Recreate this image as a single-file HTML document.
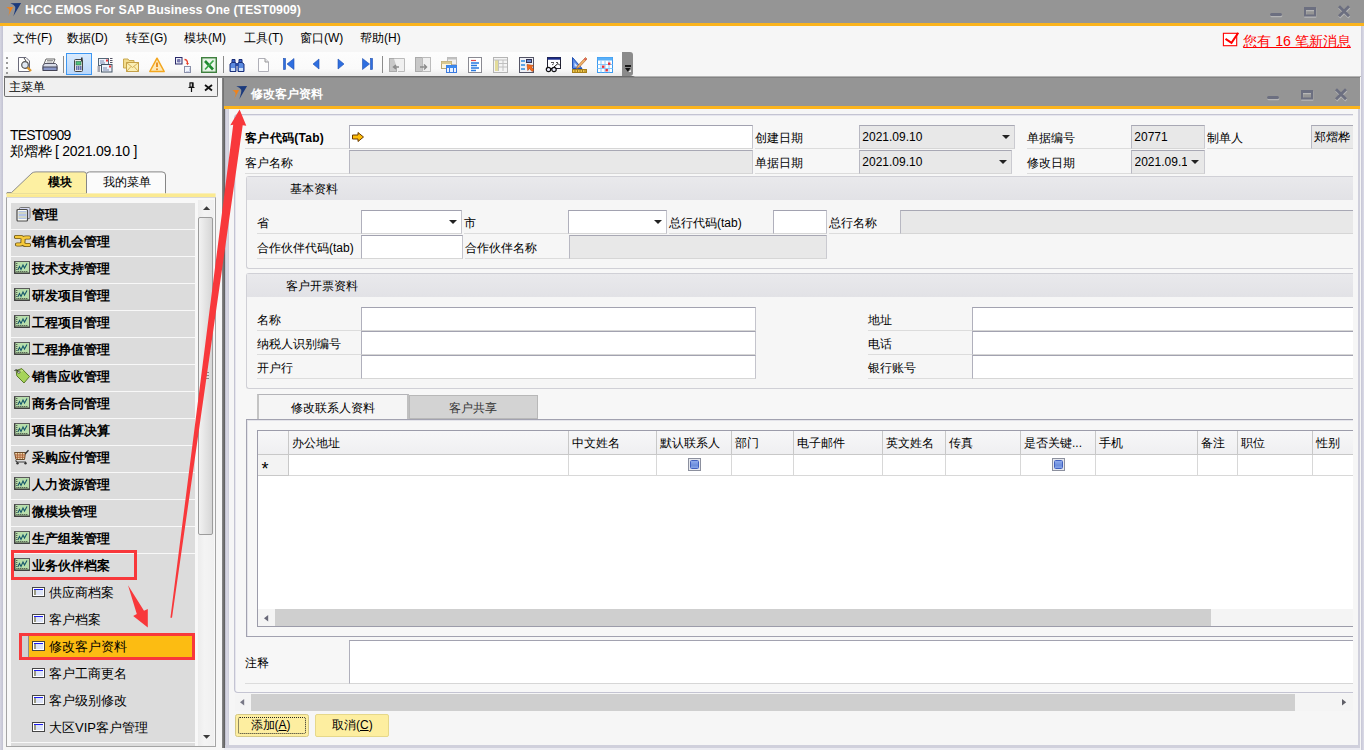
<!DOCTYPE html>
<html lang="zh">
<head>
<meta charset="utf-8">
<title>HCC EMOS For SAP Business One (TEST0909)</title>
<style>
*{box-sizing:border-box;margin:0;padding:0}
html,body{width:1364px;height:750px;overflow:hidden}
body{position:relative;background:#f6f6f6;font-family:"Liberation Sans",sans-serif;font-size:13px;color:#000;line-height:1}
.abs,.abs *{position:absolute}
#app{position:absolute;left:0;top:0;width:1364px;height:750px;overflow:hidden}
#app div,#app span,#app svg,#app a,#app b,#app i{position:absolute;white-space:nowrap}
/* title */
#tbar{left:0;top:0;width:1364px;height:23px;background:#959595}
#tline{left:0;top:23px;width:1364px;height:3px;background:#fbb41d}
#ttext{left:25px;top:4px;color:#fff;font-weight:bold;font-size:12.4px}
.lb{left:0;top:26px;width:3px;height:724px;background:linear-gradient(90deg,#d6d6e2,#c2c2d2)}
.rb{left:1361px;top:26px;width:3px;height:724px;background:linear-gradient(90deg,#c6c6d6,#dcdce8)}
.bb{left:224px;top:745px;width:1135.500px;height:5px;background:linear-gradient(#d0d0dc 0,#d0d0dc 3px,#ececf2 3.500px)}
.mi{top:32px;font-size:12px}
#msg{left:1243.200px;top:34px;font-size:14.200px;color:#f00;text-decoration:underline}
/* toolbar */
#tool{left:4px;top:52px;width:619px;height:24px;background:linear-gradient(#fdfdfd,#fafafa 70%,#e9e9e9)}
#toolcap{left:622px;top:52px;width:11px;height:24px;background:#8b8b8b;border-radius:0 3px 3px 0}
#sep1{left:4px;top:76px;width:1357px;height:1px;background:linear-gradient(90deg,#6c6c6c 0,#6c6c6c 629px,#b4b4b4 631px)}
#sep2{left:4px;top:77px;width:1355.500px;height:1px;background:#838383}
/* left panel */
#lphead{left:4px;top:78px;width:214px;height:19px;border:1px solid #6e6e6e;border-top:none;background:#f0f0f0;border-radius:0 0 2px 2px}
#lphead span{left:4.300px;top:3px;font-size:12px}
.u1{left:10px;top:128px;font-size:14px;letter-spacing:-0.8px}
.u2{left:10px;top:144px;font-size:14px;letter-spacing:-0.25px}
.row{left:11px;width:184px;height:26px;background:#dcdcdc}
.row b{left:21px;top:4.500px;font-size:13px}
.sub{left:11px;width:184px;height:27px;background:#dcdcdc}
.sub span{left:38px;top:6.500px;font-size:13px}
.sico{left:21px;top:8px;width:13px;height:10px;border:1px solid #444;background:#fff}
.sico i{position:absolute;left:1px;top:1px;width:9px;height:6px;background:linear-gradient(90deg,#9a9a84 0,#9a9a84 1.500px,#dde4f8 1.500px);border-top:1.500px solid #1c1cf0}
/* main window */
#mw{left:223px;top:78px;width:1135px;height:667px;background:#f6f6f6}
.lbl{font-size:12px;color:#000;margin-top:1px}
.ul{height:1px;background:#dcdcdc}
.inp{background:#fff;border:1px solid #c4c4cc;border-top-color:#a2a2b0;border-left-color:#b0b0bc;border-bottom-color:#d6d6d6;height:24px}
.ro{background:#e8e8e8;border:1px solid #cacad0;border-top-color:#a8a8b4;border-left-color:#b8b8c2;border-bottom-color:#d6d6d6;height:24px}
.ro span,.inp span{left:2.300px;top:5px;font-size:12px}
.dd{width:0;height:0;border-left:4px solid transparent;border-right:4px solid transparent;border-top:4px solid #222}
.grp{border:1px solid #d0d0d6;background:#f6f6f6}
.grph{left:0;top:0;height:23px;background:linear-gradient(#e9e9ec,#e2e2e6)}
.th{top:431px;height:24px;background:linear-gradient(#f7f7f8,#efeff1);border-right:1px solid #c8c8c8;border-bottom:1px solid #c8c8c8}
.th span{left:3px;top:6px;font-size:12px}
.td{top:455px;height:21px;border-right:1px solid #d8d8d8;border-bottom:1px solid #d8d8d8;background:#fff}
.cb{top:458px;width:13px;height:13px;border:1px solid #8c909e;background:#e6e8ee}
.cb i{position:absolute;left:1px;top:1px;width:9px;height:9px;background:linear-gradient(#8eaaec,#6c8edc 60%,#86a4e8);border:1px solid #4060c0;border-radius:1.500px}
</style>
</head>
<body>
<div id="app">
<!-- TITLE BAR -->
<div id="tbar"></div><div id="tline"></div>
<div id="ttext">HCC EMOS For SAP Business One (TEST0909)</div>
<div class="lb"></div><div class="rb"></div><div class="bb"></div>

<!-- MENU BAR -->
<div class="mi" style="left:13px">文件(F)</div>
<div class="mi" style="left:67px">数据(D)</div>
<div class="mi" style="left:126px">转至(G)</div>
<div class="mi" style="left:184px">模块(M)</div>
<div class="mi" style="left:244px">工具(T)</div>
<div class="mi" style="left:300px">窗口(W)</div>
<div class="mi" style="left:360px">帮助(H)</div>
<div id="msg">您有 16 笔新消息</div>

<!-- TOOLBAR -->
<div id="tool"></div><div id="toolcap"></div>
<div style="left:6px;top:57px;width:2px;height:2px;background:#9a9a9a"></div>
<div style="left:6px;top:62px;width:2px;height:2px;background:#9a9a9a"></div>
<div style="left:6px;top:67px;width:2px;height:2px;background:#9a9a9a"></div>
<div style="left:6px;top:72px;width:2px;height:2px;background:#9a9a9a"></div>
<svg width="16" height="16" viewBox="0 0 16 16" style="left:17px;top:56.500px"><path d="M1.500 0.500H9L12.500 4V14.500H1.500Z" fill="#fff" stroke="#6a6a7a"/><circle cx="8" cy="8" r="3.300" fill="#dfe8f4" stroke="#555" stroke-width="1.200"/><path d="M10.500 10.500L14 14" stroke="#d9952a" stroke-width="2.400"/><path d="M7 1L9 4" stroke="#444"/></svg>
<svg width="16" height="16" viewBox="0 0 16 16" style="left:42px;top:56.500px"><path d="M4 2H13L11 7H2Z" fill="#fff" stroke="#666"/><path d="M1 8L3 6.500H13.500L15 8V12.500H1Z" fill="#d8dce8" stroke="#556"/><rect x="1" y="10" width="14" height="3.500" fill="#8a98c8" stroke="#445"/><path d="M5 3.500H11M4.500 5H10.500" stroke="#999"/></svg>
<div style="left:63px;top:56px;width:1px;height:17px;background:#8c8c8c"></div>
<div style="left:66px;top:53px;width:26px;height:22px;border:1px solid #3d97f2;background:linear-gradient(#d9eafc,#b9d7fb)"></div>
<svg width="16" height="16" viewBox="0 0 16 16" style="left:71px;top:56.500px"><rect x="3.500" y="2.500" width="8" height="12" rx="1" fill="#e8e8e8" stroke="#444"/><rect x="10" y="0.500" width="1.600" height="4" fill="#333"/><rect x="5" y="4.500" width="5" height="3.500" fill="#4fc07a" stroke="#2a6a4a" stroke-width=".6"/><path d="M5 10H6.500M7 10H8.500M9 10H10.500M5 12H6.500M7 12H8.500M9 12H10.500" stroke="#3a4a9a" stroke-width="1.300"/></svg>
<svg width="16" height="16" viewBox="0 0 16 16" style="left:97px;top:56.500px"><rect x="1.500" y="1.500" width="10" height="7" fill="#eef2fa" stroke="#567"/><rect x="9" y="2.500" width="2" height="2" fill="#e33"/><path d="M3 4H7M3 6H8" stroke="#7a8ab0"/><rect x="4.500" y="7.500" width="10.500" height="7.500" fill="#eef2fa" stroke="#456"/><rect x="12" y="8.500" width="2" height="2" fill="#e33"/><path d="M6 11H10M6 13H12" stroke="#7a8ab0"/><path d="M13 1.500H15.500M13 3.500H15.500M13 5.500H15.500M0.500 10H3M0.500 12H3M0.500 14H3" stroke="#556"/></svg>
<svg width="16" height="16" viewBox="0 0 16 16" style="left:123px;top:56.500px"><path d="M0.500 2H5L6 3.500H11V11H0.500Z" fill="#f3dc8c" stroke="#c8a850"/><rect x="3.500" y="5.500" width="12" height="9" fill="#fbefb4" stroke="#c4a048"/><path d="M3.500 5.500L9.500 10.500L15.500 5.500M3.500 14.500L8 9.500M15.500 14.500L11 9.500" stroke="#d4b058" fill="none"/></svg>
<svg width="16" height="16" viewBox="0 0 16 16" style="left:149px;top:56.500px"><path d="M8 1.200L15.200 14.500H0.800Z" fill="#fde9b8" stroke="#f3a61e" stroke-width="1.500" stroke-linejoin="round"/><path d="M8 5.500V10" stroke="#e88a1a" stroke-width="1.800"/><circle cx="8" cy="12.200" r="1" fill="#e88a1a"/></svg>
<svg width="16" height="16" viewBox="0 0 16 16" style="left:175px;top:56.500px"><rect x="0.500" y="0.500" width="6.500" height="6.500" fill="#eceef8" stroke="#2a2a6a"/><path d="M2.500 2.500H5V5H2.500Z" stroke="#5a5a9a" fill="#c8cce8" stroke-width=".7"/><path d="M3.750 2.500V5M2.500 3.750H5" stroke="#5a5a9a" stroke-width=".6"/><path d="M9.500 2.500Q12.500 2.500 12.500 6.500" stroke="#e8402a" stroke-width="1.300" fill="none"/><path d="M11 6L12.500 8.200L14 6Z" fill="#e8402a"/><rect x="9.500" y="9.500" width="6" height="6" fill="#f2f5fc" stroke="#8a90a8"/><path d="M11 14.500H14.500V11" stroke="#c8d0e8" fill="none"/></svg>
<svg width="16" height="16" viewBox="0 0 16 16" style="left:201px;top:56.500px"><rect x="0.700" y="0.700" width="14.600" height="14.600" fill="#d8ecd8" stroke="#3f803f" stroke-width="1.400"/><rect x="2.500" y="2.500" width="11" height="11" fill="#eef8ee"/><path d="M4 4L12 12.500" stroke="#1f8a30" stroke-width="2.600"/><path d="M12.500 3.500L4 12.500" stroke="#3aa848" stroke-width="1.800"/></svg>
<div style="left:223px;top:56px;width:1px;height:17px;background:#8c8c8c"></div>
<svg width="16" height="16" viewBox="0 0 16 16" style="left:229px;top:56.500px"><path d="M3 2.500H6V6H3Z M10 2.500H13V6H10Z" fill="#3a62c8" stroke="#1a2f7a"/><path d="M1 7L3 5.500H6.500L7 7V14.500H1Z M9 7L9.500 5.500H13L15 7V14.500H9Z" fill="#5a8ae0" stroke="#1a2f7a"/><rect x="6.500" y="6" width="3" height="3" fill="#2a4aa0"/><rect x="2" y="11" width="4" height="3" fill="#cfe0fa"/><rect x="10" y="11" width="4" height="3" fill="#cfe0fa"/></svg>
<svg width="16" height="16" viewBox="0 0 16 16" style="left:255px;top:56.500px"><path d="M3.500 1.500H10L13.500 5V14.500H3.500Z" fill="#fdfdfd" stroke="#b0b0b8"/><path d="M10 1.500V5H13.500" fill="#e4e4e8" stroke="#999"/></svg>
<svg width="16" height="16" viewBox="0 0 16 16" style="left:281px;top:56px"><rect x="2.500" y="2.500" width="2" height="11" fill="#2f6fe0" stroke="#1f4fb0" stroke-width=".6"/><path d="M13 2.500V13.500L6 8Z" fill="#2f6fe0" stroke="#1f4fb0" stroke-width=".6"/></svg>
<svg width="16" height="16" viewBox="0 0 16 16" style="left:307px;top:56px"><path d="M12 3V13L6 8Z" fill="#2f6fe0" stroke="#1f4fb0" stroke-width=".6"/></svg>
<svg width="16" height="16" viewBox="0 0 16 16" style="left:333px;top:56px"><path d="M5 3V13L11 8Z" fill="#2f6fe0" stroke="#1f4fb0" stroke-width=".6"/></svg>
<svg width="16" height="16" viewBox="0 0 16 16" style="left:359px;top:56px"><rect x="11.500" y="2.500" width="2" height="11" fill="#2f6fe0" stroke="#1f4fb0" stroke-width=".6"/><path d="M3.500 2.500V13.500L10.500 8Z" fill="#2f6fe0" stroke="#1f4fb0" stroke-width=".6"/></svg>
<div style="left:382px;top:56px;width:1px;height:17px;background:#8c8c8c"></div>
<svg width="16" height="16" viewBox="0 0 16 16" style="left:389px;top:56.500px"><rect x="0.500" y="1.500" width="7" height="13" fill="#c8c8c8" stroke="#aaa"/><path d="M5 1.500H15.500V14.500H9" fill="#f0f0f0" stroke="#bbb"/><path d="M10 10H5M7 8L4.500 10L7 12" stroke="#8a8a8a" stroke-width="1.400" fill="none"/></svg>
<svg width="16" height="16" viewBox="0 0 16 16" style="left:415px;top:56.500px"><rect x="0.500" y="0.500" width="7" height="14" fill="#c8c8c8" stroke="#aaa"/><rect x="7.500" y="0.500" width="8" height="14" fill="#f0f0f0" stroke="#bbb"/><path d="M5 10H11M9 7.500L11.500 10L9 12.500" stroke="#8a8a8a" stroke-width="1.400" fill="none"/></svg>
<svg width="16" height="16" viewBox="0 0 16 16" style="left:441px;top:56.500px"><rect x="6.500" y="0.500" width="9" height="7" fill="#f0f0f0" stroke="#bbb"/><rect x="6.500" y="0.500" width="9" height="2" fill="#c0c0c0"/><rect x="0.500" y="4.500" width="10" height="7" fill="#fbf6e0" stroke="#b8a878"/><rect x="0.500" y="4.500" width="10" height="2.500" fill="#d8c890"/><rect x="5.500" y="8.500" width="10" height="7" fill="#eaf2ff" stroke="#3a7ae0"/><rect x="5.500" y="8.500" width="10" height="2.500" fill="#3a8af0"/><path d="M8.500 11V15.500M12.500 11V15.500" stroke="#3a7ae0"/></svg>
<svg width="16" height="16" viewBox="0 0 16 16" style="left:466px;top:56.500px"><rect x="2.500" y="0.500" width="13" height="15" fill="#fff" stroke="#8a8a92"/><path d="M5 3.500H10" stroke="#e04a4a" stroke-width="1.200"/><path d="M5 6H13M5 8.500H11M5 11H13M5 13.500H10" stroke="#2a7ae0" stroke-width="1.300"/></svg>
<svg width="16" height="16" viewBox="0 0 16 16" style="left:492px;top:56.500px"><rect x="1.500" y="0.500" width="14" height="15" fill="#f4f4f4" stroke="#b4b4b4"/><rect x="3" y="3" width="3" height="11" fill="#e3dc9a"/><path d="M6.500 3V14M11 3V14M6.500 6.500H15M6.500 10H15M2 3H15" stroke="#c0c0c0"/></svg>
<svg width="16" height="16" viewBox="0 0 16 16" style="left:518px;top:56.500px"><rect x="1.500" y="0.500" width="14" height="15" fill="#eef0f6" stroke="#556"/><path d="M3 4H7M3 8H7M3 12H7" stroke="#2a8ae0" stroke-width="1.300"/><rect x="8.500" y="2.500" width="5" height="3" fill="#6a8ad0" stroke="#335"/><path d="M9 7.500L15.500 8.500L13.500 10L16 13L14 14.500L11.500 11.500L9.800 13.500Z" fill="#f26a1a" stroke="#b0400a" stroke-width=".6"/></svg>
<svg width="16" height="16" viewBox="0 0 16 16" style="left:544.5px;top:56.500px"><rect x="2.500" y="0.500" width="13" height="11" fill="#fff" stroke="#223"/><rect x="2.500" y="0.500" width="13" height="2.200" fill="#1a2a8a"/><path d="M6 5.500H9M11 5.500H13M7 8L9 6.500" stroke="#555"/><circle cx="3.500" cy="12.500" r="2.200" fill="#eef" stroke="#111" stroke-width="1.200"/><circle cx="9" cy="12.500" r="2.200" fill="#eef" stroke="#111" stroke-width="1.200"/><path d="M5.500 12H7M9 10L13 6.500L15 8.500" stroke="#111" fill="none"/></svg>
<svg width="16" height="16" viewBox="0 0 16 16" style="left:570.5px;top:56.500px"><path d="M1.500 0.500L11 11.500H1.500Z" fill="#5a8ae8" stroke="#1f4fb0"/><path d="M3.500 5.500L7 9.500H3.500Z" fill="#cfe0fa"/><path d="M14.500 0.500L16 2L8 10.500L5.500 11.500L6.500 9Z" fill="#f2b46a" stroke="#b06a2a" stroke-width=".7"/><path d="M13.500 1.500L15 3" stroke="#e0505a" stroke-width="1.600"/><rect x="1.500" y="12.500" width="14" height="3" fill="#f2c84a" stroke="#a8801a"/><path d="M4 13V15M6.500 13V15M9 13V15M11.500 13V15M14 13V15" stroke="#7a5a10" stroke-width=".7"/></svg>
<svg width="17" height="16" viewBox="0 0 17 16" style="left:596px;top:56.500px"><rect x="1.500" y="0.500" width="15" height="15" fill="#fff" stroke="#3a9af0"/><rect x="1.500" y="0.500" width="15" height="3" fill="#5ab0f8"/><path d="M5 3.500V15.500M9 3.500V15.500M13 3.500V15.500M1.500 7.500H16.500M1.500 11.500H16.500" stroke="#8ac8fa"/><rect x="6" y="8.500" width="2.400" height="2.400" fill="#e8303a"/><rect x="12" y="5.500" width="2.400" height="2.400" fill="#e8303a"/><rect x="9.500" y="12" width="2.400" height="2.400" fill="#e8303a"/></svg>
<div style="left:625px;top:65px;width:5.500px;height:1.500px;background:#1a1a1a"></div>
<svg width="6" height="4" viewBox="0 0 6 4" style="left:625px;top:68px"><path d="M0 0H5.600L2.800 3.700Z" fill="#111"/><path d="M3.600 4L5.800 1.800V4Z" fill="#fff"/></svg>
<svg width="18" height="16" viewBox="0 0 18 16" style="left:1222px;top:31px"><rect x="1.400" y="2.300" width="13.300" height="12.400" fill="#fff" stroke="#ff0000" stroke-width="1.100"/><path d="M3.500 7.800L9.500 11.800L16.300 1.800" stroke="#ff0000" stroke-width="2" fill="none" stroke-linejoin="miter"/></svg>
<div id="sep1"></div><div id="sep2"></div>

<!-- LEFT PANEL -->
<div id="lphead"><span>主菜单</span></div>
<svg width="7" height="10" viewBox="0 0 7 10" style="left:188px;top:82px"><path d="M1.500 0.800H5.500M2 0.800V5H5V0.800M0.500 5.500H6.500M3.500 5.500V10" stroke="#111" stroke-width="1.200" fill="none"/><path d="M4.500 1V5" stroke="#111" stroke-width="1.400"/></svg>
<svg width="9" height="8" viewBox="0 0 9 8" style="left:204px;top:84px"><path d="M1 1L8 6.500M8 1L1 6.500" stroke="#111" stroke-width="1.800"/></svg>
<div class="u1">TEST0909</div>
<div class="u2">郑熠桦 [ 2021.09.10 ]</div>


<!-- left tabs -->
<svg width="216" height="30" viewBox="0 0 216 30" style="left:4px;top:168px">
 <path d="M2.600 25.500 L3 24.600 L7.500 24.600 L28 5 Q29.500 3.900 32 3.900 H80 Q82.500 3.900 82.500 6.500 V25.500 Z" fill="#fdf0a2" stroke="#8c8c8c"/>
 <path d="M82.500 25.500 V6.500 Q82.500 3.900 85.500 3.900 H158 Q161.500 3.900 161.500 7 V25.500" fill="#fbfbfb" stroke="#868686"/>
 <rect x="2.600" y="25.400" width="209" height="4.200" fill="#fbea92"/>
 <rect x="2.600" y="25.400" width="80" height="1.200" fill="#fdf0a2"/>
</svg>
<div style="left:48px;top:176px;font-size:12px;font-weight:bold">模块</div>
<div style="left:103px;top:176px;font-size:12px">我的菜单</div>
<div style="left:6px;top:197px;width:210px;height:550px;border:1px solid #a4a4a4;border-top-color:#d8d8d8;background:#f8f8f8"></div>
<div class="row" style="top:203px"><svg width="15" height="15" viewBox="0 0 15 15" style="left:4.500px;top:4px"><rect x="3.500" y="0.500" width="10.500" height="11" rx="1" fill="#d4d8f0" stroke="#777"/><rect x="1" y="2.500" width="10.500" height="11.500" rx="1" fill="#fbfbf4" stroke="#4a4a4a" stroke-width="1.200"/><path d="M2.500 5H10.500M2.500 7H10.500M2.500 9H10.500M2.500 11H10.500" stroke="#6a8ad8" stroke-width="1"/><path d="M2.500 6H10.500M2.500 10H10.500" stroke="#ece6a8" stroke-width="1"/></svg><b>管理</b></div>
<div class="row" style="top:230px"><svg width="17" height="14" viewBox="0 0 17 14" style="left:3px;top:4px"><g fill="none" stroke="#6a5518" stroke-width="4.200" stroke-linecap="round"><path d="M2 3H6Q9.500 3 9.500 6.500Q9.500 10.500 6 10.500H3"/><path d="M15 3.500H12Q8.500 3.500 8.500 7Q8.500 11 12 11H15"/></g><g fill="none" stroke="#f6c93a" stroke-width="2.400" stroke-linecap="round"><path d="M2 3H6Q9.500 3 9.500 6.500Q9.500 10.500 6 10.500H3"/><path d="M15 3.500H12Q8.500 3.500 8.500 7Q8.500 11 12 11H15"/></g></svg><b>销售机会管理</b></div>
<div class="row" style="top:257px"><svg width="16" height="13" viewBox="0 0 16 13" style="left:3px;top:4px"><rect x="0.500" y="0.500" width="15" height="12" fill="#b8deac" stroke="#5a5a5a"/><path d="M0.800 0.500V12.500M0.500 12.200H15.500" stroke="#3a3a3a" stroke-width="1.200"/><path d="M2.800 2V10.500H14" stroke="#222" stroke-width=".9" stroke-dasharray="1 1" fill="none"/><path d="M3.800 9L5.500 5.500L7 8.500L9 4L10.500 7L13 2.500" stroke="#17586a" stroke-width="1.100" fill="none"/></svg><b>技术支持管理</b></div>
<div class="row" style="top:284px"><svg width="16" height="13" viewBox="0 0 16 13" style="left:3px;top:4px"><rect x="0.500" y="0.500" width="15" height="12" fill="#b8deac" stroke="#5a5a5a"/><path d="M0.800 0.500V12.500M0.500 12.200H15.500" stroke="#3a3a3a" stroke-width="1.200"/><path d="M2.800 2V10.500H14" stroke="#222" stroke-width=".9" stroke-dasharray="1 1" fill="none"/><path d="M3.800 9L5.500 5.500L7 8.500L9 4L10.500 7L13 2.500" stroke="#17586a" stroke-width="1.100" fill="none"/></svg><b>研发项目管理</b></div>
<div class="row" style="top:311px"><svg width="16" height="13" viewBox="0 0 16 13" style="left:3px;top:4px"><rect x="0.500" y="0.500" width="15" height="12" fill="#b8deac" stroke="#5a5a5a"/><path d="M0.800 0.500V12.500M0.500 12.200H15.500" stroke="#3a3a3a" stroke-width="1.200"/><path d="M2.800 2V10.500H14" stroke="#222" stroke-width=".9" stroke-dasharray="1 1" fill="none"/><path d="M3.800 9L5.500 5.500L7 8.500L9 4L10.500 7L13 2.500" stroke="#17586a" stroke-width="1.100" fill="none"/></svg><b>工程项目管理</b></div>
<div class="row" style="top:338px"><svg width="16" height="13" viewBox="0 0 16 13" style="left:3px;top:4px"><rect x="0.500" y="0.500" width="15" height="12" fill="#b8deac" stroke="#5a5a5a"/><path d="M0.800 0.500V12.500M0.500 12.200H15.500" stroke="#3a3a3a" stroke-width="1.200"/><path d="M2.800 2V10.500H14" stroke="#222" stroke-width=".9" stroke-dasharray="1 1" fill="none"/><path d="M3.800 9L5.500 5.500L7 8.500L9 4L10.500 7L13 2.500" stroke="#17586a" stroke-width="1.100" fill="none"/></svg><b>工程挣值管理</b></div>
<div class="row" style="top:365px"><svg width="20" height="20" viewBox="0 0 20 20" style="left:0;top:0"><path d="M5.200 5.500L10.800 3.600L18.500 11.500L13 18L5.800 10.800Z" fill="#a6d45a" stroke="#5a7a2a" stroke-width="1"/><path d="M7 7L12 5.500" stroke="#d4eca0" stroke-width="1"/><circle cx="7.800" cy="7" r="1.300" fill="#f4f4f4" stroke="#333" stroke-width=".7"/><path d="M7.500 6.500Q5 3.500 3.500 5.500" stroke="#222" stroke-width="1" fill="none"/></svg><b>销售应收管理</b></div>
<div class="row" style="top:392px"><svg width="16" height="13" viewBox="0 0 16 13" style="left:3px;top:4px"><rect x="0.500" y="0.500" width="15" height="12" fill="#b8deac" stroke="#5a5a5a"/><path d="M0.800 0.500V12.500M0.500 12.200H15.500" stroke="#3a3a3a" stroke-width="1.200"/><path d="M2.800 2V10.500H14" stroke="#222" stroke-width=".9" stroke-dasharray="1 1" fill="none"/><path d="M3.800 9L5.500 5.500L7 8.500L9 4L10.500 7L13 2.500" stroke="#17586a" stroke-width="1.100" fill="none"/></svg><b>商务合同管理</b></div>
<div class="row" style="top:419px"><svg width="16" height="13" viewBox="0 0 16 13" style="left:3px;top:4px"><rect x="0.500" y="0.500" width="15" height="12" fill="#b8deac" stroke="#5a5a5a"/><path d="M0.800 0.500V12.500M0.500 12.200H15.500" stroke="#3a3a3a" stroke-width="1.200"/><path d="M2.800 2V10.500H14" stroke="#222" stroke-width=".9" stroke-dasharray="1 1" fill="none"/><path d="M3.800 9L5.500 5.500L7 8.500L9 4L10.500 7L13 2.500" stroke="#17586a" stroke-width="1.100" fill="none"/></svg><b>项目估算决算</b></div>
<div class="row" style="top:446px"><svg width="20" height="20" viewBox="0 0 20 20" style="left:0;top:0"><path d="M3.500 6.500H14.500L13.500 13.500H5Z" fill="#ecd9b0" stroke="#6a4a2a" stroke-width="1"/><path d="M4 9H14M4.500 11.200H13.800" stroke="#b0522a" stroke-width="1"/><path d="M6.500 7V13M9 7V13M11.500 7V13" stroke="#a86a3a" stroke-width=".9"/><path d="M14 8L17.500 4.200" stroke="#333" stroke-width="1.300"/><path d="M4.500 14.500L6 16H15" stroke="#444" stroke-width="1.200" fill="none"/><circle cx="6.500" cy="17.200" r="1.200" fill="#333"/><circle cx="14.500" cy="17.200" r="1.200" fill="#333"/></svg><b>采购应付管理</b></div>
<div class="row" style="top:473px"><svg width="16" height="13" viewBox="0 0 16 13" style="left:3px;top:4px"><rect x="0.500" y="0.500" width="15" height="12" fill="#b8deac" stroke="#5a5a5a"/><path d="M0.800 0.500V12.500M0.500 12.200H15.500" stroke="#3a3a3a" stroke-width="1.200"/><path d="M2.800 2V10.500H14" stroke="#222" stroke-width=".9" stroke-dasharray="1 1" fill="none"/><path d="M3.800 9L5.500 5.500L7 8.500L9 4L10.500 7L13 2.500" stroke="#17586a" stroke-width="1.100" fill="none"/></svg><b>人力资源管理</b></div>
<div class="row" style="top:500px"><svg width="16" height="13" viewBox="0 0 16 13" style="left:3px;top:4px"><rect x="0.500" y="0.500" width="15" height="12" fill="#b8deac" stroke="#5a5a5a"/><path d="M0.800 0.500V12.500M0.500 12.200H15.500" stroke="#3a3a3a" stroke-width="1.200"/><path d="M2.800 2V10.500H14" stroke="#222" stroke-width=".9" stroke-dasharray="1 1" fill="none"/><path d="M3.800 9L5.500 5.500L7 8.500L9 4L10.500 7L13 2.500" stroke="#17586a" stroke-width="1.100" fill="none"/></svg><b>微模块管理</b></div>
<div class="row" style="top:527px"><svg width="16" height="13" viewBox="0 0 16 13" style="left:3px;top:4px"><rect x="0.500" y="0.500" width="15" height="12" fill="#b8deac" stroke="#5a5a5a"/><path d="M0.800 0.500V12.500M0.500 12.200H15.500" stroke="#3a3a3a" stroke-width="1.200"/><path d="M2.800 2V10.500H14" stroke="#222" stroke-width=".9" stroke-dasharray="1 1" fill="none"/><path d="M3.800 9L5.500 5.500L7 8.500L9 4L10.500 7L13 2.500" stroke="#17586a" stroke-width="1.100" fill="none"/></svg><b>生产组装管理</b></div>
<div class="row" style="top:554px"><svg width="16" height="13" viewBox="0 0 16 13" style="left:3px;top:4px"><rect x="0.500" y="0.500" width="15" height="12" fill="#b8deac" stroke="#5a5a5a"/><path d="M0.800 0.500V12.500M0.500 12.200H15.500" stroke="#3a3a3a" stroke-width="1.200"/><path d="M2.800 2V10.500H14" stroke="#222" stroke-width=".9" stroke-dasharray="1 1" fill="none"/><path d="M3.800 9L5.500 5.500L7 8.500L9 4L10.500 7L13 2.500" stroke="#17586a" stroke-width="1.100" fill="none"/></svg><b>业务伙伴档案</b></div>
<div style="left:11px;top:580px;width:184px;height:162px;background:#dcdcdc"></div><div style="left:11px;top:743px;width:184px;height:3px;background:#dcdcdc"></div>
<div class="sub" style="top:579px;background:transparent"><div class="sico"><i></i></div><span>供应商档案</span></div>
<div class="sub" style="top:606px;background:transparent"><div class="sico"><i></i></div><span>客户档案</span></div>
<div style="left:22px;top:634px;width:6px;height:26px;background:#d2d2d2"></div><div style="left:28.500px;top:634px;width:165px;height:26px;background:#fcbc12"></div>
<div style="left:27.500px;top:634px;width:1px;height:26px;background:#8c8c8c"></div>
<div class="sub" style="top:633px;background:transparent"><div class="sico"><i></i></div><span>修改客户资料</span></div>
<div class="sub" style="top:660px;background:transparent"><div class="sico"><i></i></div><span>客户工商更名</span></div>
<div class="sub" style="top:687px;background:transparent"><div class="sico"><i></i></div><span>客户级别修改</span></div>
<div class="sub" style="top:714px;background:transparent"><div class="sico"><i></i></div><span>大区VIP客户管理</span></div>
<!-- left scrollbar -->
<div style="left:198px;top:200px;width:16px;height:546px;background:linear-gradient(90deg,#ececec,#f4f4f4 40%,#f0f0f0)"></div>
<div style="left:198px;top:217px;width:15px;height:318px;border:1px solid #9c9c9c;border-radius:2px;background:linear-gradient(90deg,#f2f2f2,#d6d6d6)"></div>
<svg width="8" height="5" viewBox="0 0 8 5" style="left:202.800px;top:205.800px"><path d="M0 4L3.600 0.300L7.200 4Z" fill="#3a3a3a"/></svg>
<svg width="8" height="5" viewBox="0 0 8 5" style="left:202.800px;top:735.200px"><path d="M0 0L3.600 3.700L7.200 0Z" fill="#3a3a3a"/></svg>
<div style="left:203px;top:372px;width:6px;height:1px;background:#888"></div><div style="left:203px;top:375px;width:6px;height:1px;background:#888"></div><div style="left:203px;top:378px;width:6px;height:1px;background:#888"></div>
<!-- red annotation boxes -->
<div style="left:11px;top:550px;width:126px;height:30px;border:3px solid #f8383b"></div>
<div style="left:19px;top:633px;width:176px;height:27px;border:3px solid #f8383b"></div>

<!-- MAIN WINDOW -->
<div id="mw"></div>
<div style="left:222.400px;top:78px;width:2.500px;height:669.500px;background:linear-gradient(90deg,#8a8a8a,#5c5c5c)"></div>
<div style="left:224px;top:78px;width:1135.500px;height:28px;background:#959595"></div>
<div style="left:224px;top:106px;width:1135.500px;height:3px;background:#fbb41d"></div>
<div style="left:225px;top:109px;width:3.800px;height:636px;background:linear-gradient(90deg,#b4b4c4,#d6d6e2 30%,#d6d6e2 80%,#c4c4d0)"></div>
<div style="left:1357.500px;top:109px;width:2px;height:636px;background:#d0d0dc"></div>
<div style="left:251px;top:88px;font-size:12px;font-weight:bold;color:#fff">修改客户资料</div>
<svg width="24" height="18" viewBox="0 0 24 18" style="left:226px;top:83px"><path d="M10.300 3.300 L21.100 3 L13.300 16.200 Q15.800 8.500 15.200 6.800 Q14 4.500 10.300 3.300Z" fill="#1b3a7c"/><path d="M6.300 7.200 L13.100 7 L8 16.300 Q10 11.500 9.500 10 Q8.800 8.300 6.300 7.200Z" fill="#f0831a"/></svg>
<svg width="24" height="18" viewBox="0 0 24 18" style="left:0px;top:0px"><path d="M10.300 3.300 L21.100 3 L13.300 16.200 Q15.800 8.500 15.200 6.800 Q14 4.500 10.300 3.300Z" fill="#1b3a7c"/><path d="M6.300 7.200 L13.100 7 L8 16.300 Q10 11.500 9.500 10 Q8.800 8.300 6.300 7.200Z" fill="#f0831a"/></svg>
<svg width="84" height="16" viewBox="0 0 84 16" style="left:1266.7px;top:88px"><g transform="translate(0.300,1.200)" fill="#c2c2c2" color="#c2c2c2" opacity=".75"><rect x="0" y="8" width="12" height="3" rx="1.500"/><path d="M34 2H46V11.500H34Z M36 5V9.500H44V5Z" fill-rule="evenodd"/><path d="M69 1.200L79 11.300M79 1.200L69 11.300" stroke-width="2.800" fill="none" stroke="currentColor"/></g><g fill="#6c6f80" color="#6c6f80"><rect x="0" y="8" width="12" height="3" rx="1.500"/><path d="M34 2H46V11.500H34Z M36 5V9.500H44V5Z" fill-rule="evenodd"/><path d="M69 1.200L79 11.300M79 1.200L69 11.300" stroke-width="2.800" fill="none" stroke="currentColor"/></g></svg>
<svg width="84" height="16" viewBox="0 0 84 16" style="left:1270px;top:5px"><g transform="translate(0.300,1.200)" fill="#c2c2c2" color="#c2c2c2" opacity=".75"><rect x="0" y="8" width="12" height="3" rx="1.500"/><path d="M34 2H46V11.500H34Z M36 5V9.500H44V5Z" fill-rule="evenodd"/><path d="M69 1.200L79 11.300M79 1.200L69 11.300" stroke-width="2.800" fill="none" stroke="currentColor"/></g><g fill="#6c6f80" color="#6c6f80"><rect x="0" y="8" width="12" height="3" rx="1.500"/><path d="M34 2H46V11.500H34Z M36 5V9.500H44V5Z" fill-rule="evenodd"/><path d="M69 1.200L79 11.300M79 1.200L69 11.300" stroke-width="2.800" fill="none" stroke="currentColor"/></g></svg>
<div style="left:234px;top:114px;width:1119px;height:579px;border:1px solid #c4c4d2;border-right:none;border-radius:4px 0 0 4px;background:#f7f7f7;box-shadow:inset 1px 1px 0 #e6e6ee"></div>
<div class="lbl" style="left:245px;top:131px;font-weight:bold;letter-spacing:.3px">客户代码(Tab)</div><div class="ul" style="left:245px;top:148px;width:104px"></div>
<div class="inp" style="left:349px;top:125px;width:404px;height:24px"></div>
<svg width="12" height="10" viewBox="0 0 12 10" style="left:352px;top:131.500px"><path d="M0.500 3H6V0.500L11.500 5L6 9.500V7H0.500Z" fill="#ffbe0a" stroke="#6a3a00" stroke-width="1"/></svg>
<div class="lbl" style="left:755px;top:131px">创建日期</div><div class="ul" style="left:755px;top:148px;width:104px"></div>
<div class="ro" style="left:859px;top:125px;width:156px;height:24px"><span>2021.09.10</span><div class="dd" style="left:142px;top:9px"></div></div>
<div class="lbl" style="left:1027px;top:131px">单据编号</div><div class="ul" style="left:1027px;top:148px;width:105px"></div>
<div class="ro" style="left:1131px;top:125px;width:74px;height:24px"><span>20771</span></div>
<div class="lbl" style="left:1207px;top:131px">制单人</div><div class="ul" style="left:1207px;top:148px;width:104px"></div>
<div class="ro" style="left:1311px;top:125px;width:46px;height:24px"><span>郑熠桦</span></div>
<div class="lbl" style="left:245px;top:156px">客户名称</div><div class="ul" style="left:245px;top:173px;width:104px"></div>
<div class="ro" style="left:349px;top:150px;width:404px;height:24px"></div>
<div class="lbl" style="left:755px;top:156px">单据日期</div><div class="ul" style="left:755px;top:173px;width:104px"></div>
<div class="ro" style="left:859px;top:150px;width:153px;height:24px"><span>2021.09.10</span><div class="dd" style="left:139px;top:9px"></div></div>
<div class="lbl" style="left:1027px;top:156px">修改日期</div><div class="ul" style="left:1027px;top:173px;width:105px"></div>
<div class="ro" style="left:1131px;top:150px;width:74px;height:24px"><span style="left:2.500px;width:52px;overflow:hidden">2021.09.10</span><div class="dd" style="left:59px;top:9px"></div></div>
<div class="grp" style="left:246px;top:176px;width:1107px;height:93px;border-right:none;border-radius:3px 0 0 3px"><div class="grph" style="width:1106px"></div></div>
<div class="lbl" style="left:290px;top:182px">基本资料</div>
<div class="lbl" style="left:257px;top:216px">省</div><div class="ul" style="left:257px;top:233px;width:104px"></div>
<div class="inp" style="left:361px;top:210px;width:101px;height:24px"><div class="dd" style="left:87px;top:9px"></div></div>
<div class="lbl" style="left:464px;top:216px">市</div><div class="ul" style="left:464px;top:233px;width:104px"></div>
<div class="inp" style="left:568px;top:210px;width:99px;height:24px"><div class="dd" style="left:85px;top:9px"></div></div>
<div class="lbl" style="left:669px;top:216px">总行代码(tab)</div><div class="ul" style="left:669px;top:233px;width:104px"></div>
<div class="inp" style="left:773px;top:210px;width:54px;height:24px"></div>
<div class="lbl" style="left:829px;top:216px">总行名称</div><div class="ul" style="left:829px;top:233px;width:71px"></div>
<div class="ro" style="left:900px;top:210px;width:457px;height:24px"></div>
<div class="lbl" style="left:257px;top:241px">合作伙伴代码(tab)</div><div class="ul" style="left:257px;top:258px;width:104px"></div>
<div class="inp" style="left:361px;top:235px;width:102px;height:24px"></div>
<div class="lbl" style="left:465px;top:241px">合作伙伴名称</div><div class="ul" style="left:465px;top:258px;width:104px"></div>
<div class="ro" style="left:569px;top:235px;width:258px;height:24px"></div>
<div class="grp" style="left:246px;top:273px;width:1107px;height:116px;border-right:none;border-radius:3px 0 0 3px"><div class="grph" style="width:1106px"></div></div>
<div class="lbl" style="left:286px;top:279px">客户开票资料</div>
<div class="lbl" style="left:257px;top:313px">名称</div><div class="ul" style="left:257px;top:330px;width:104px"></div>
<div class="inp" style="left:361px;top:307px;width:395px;height:24px"></div>
<div class="lbl" style="left:868px;top:313px">地址</div><div class="ul" style="left:868px;top:330px;width:104px"></div>
<div class="inp" style="left:972px;top:307px;width:385px;height:24px"></div>
<div class="lbl" style="left:257px;top:337px">纳税人识别编号</div><div class="ul" style="left:257px;top:354px;width:104px"></div>
<div class="inp" style="left:361px;top:331px;width:395px;height:24px"></div>
<div class="lbl" style="left:868px;top:337px">电话</div><div class="ul" style="left:868px;top:354px;width:104px"></div>
<div class="inp" style="left:972px;top:331px;width:385px;height:24px"></div>
<div class="lbl" style="left:257px;top:361px">开户行</div><div class="ul" style="left:257px;top:378px;width:104px"></div>
<div class="inp" style="left:361px;top:355px;width:395px;height:24px"></div>
<div class="lbl" style="left:868px;top:361px">银行账号</div><div class="ul" style="left:868px;top:378px;width:104px"></div>
<div class="inp" style="left:972px;top:355px;width:385px;height:24px"></div>
<div style="left:409px;top:395px;width:129px;height:24px;background:#d3d3d3;border:1px solid #b8b8b8"></div>
<div class="lbl" style="left:449px;top:401px;color:#333">客户共享</div>
<div style="left:246px;top:419px;width:1107px;height:218px;border:1px solid #a2a2b0;border-right:none;background:#f7f7f7;box-shadow:inset 1px 1px 0 #e4e4ea"></div>
<div style="left:257px;top:394px;width:152px;height:25px;background:#f5f5f5;border:1px solid #b4b4b8;border-left:2px solid #c4c4c4;border-right:2px solid #c0c0c0;border-bottom:none"></div>
<div class="lbl" style="left:291px;top:401px">修改联系人资料</div>
<div style="left:257px;top:430px;width:1096px;height:197px;border:1px solid #9c9caa;border-right:none;background:#fff"></div>
<div class="th" style="left:258px;width:31px"><span></span></div>
<div class="td" style="left:258px;width:31px"></div>
<div class="th" style="left:289px;width:280px"><span>办公地址</span></div>
<div class="td" style="left:289px;width:280px"></div>
<div class="th" style="left:569px;width:88px"><span>中文姓名</span></div>
<div class="td" style="left:569px;width:88px"></div>
<div class="th" style="left:657px;width:75px"><span>默认联系人</span></div>
<div class="td" style="left:657px;width:75px"></div>
<div class="th" style="left:732px;width:62px"><span>部门</span></div>
<div class="td" style="left:732px;width:62px"></div>
<div class="th" style="left:794px;width:89px"><span>电子邮件</span></div>
<div class="td" style="left:794px;width:89px"></div>
<div class="th" style="left:883px;width:63px"><span>英文姓名</span></div>
<div class="td" style="left:883px;width:63px"></div>
<div class="th" style="left:946px;width:75px"><span>传真</span></div>
<div class="td" style="left:946px;width:75px"></div>
<div class="th" style="left:1021px;width:75px"><span>是否关键...</span></div>
<div class="td" style="left:1021px;width:75px"></div>
<div class="th" style="left:1096px;width:102px"><span>手机</span></div>
<div class="td" style="left:1096px;width:102px"></div>
<div class="th" style="left:1198px;width:40px"><span>备注</span></div>
<div class="td" style="left:1198px;width:40px"></div>
<div class="th" style="left:1238px;width:75px"><span>职位</span></div>
<div class="td" style="left:1238px;width:75px"></div>
<div class="th" style="left:1313px;width:41px"><span>性别</span></div>
<div class="td" style="left:1313px;width:41px"></div>
<div style="left:258px;top:455px;width:31px;height:21px;background:#f3f3f3;border-right:1px solid #c8c8c8;border-bottom:1px solid #c8c8c8"></div>
<div style="left:261.500px;top:460px;font-size:18px">*</div>
<div class="cb" style="left:688px"><i></i></div><div class="cb" style="left:1052px"><i></i></div>
<div style="left:258px;top:609px;width:1095px;height:17px;background:#f4f4f4"></div>
<div style="left:275px;top:609px;width:936px;height:17px;background:#cfcfcf"></div>
<svg width="5" height="7" viewBox="0 0 5 7" style="left:264px;top:614.500px"><path d="M4.200 0L0 3.200L4.200 6.400Z" fill="#686878"/></svg>
<div class="lbl" style="left:245px;top:656px">注释</div>
<div class="ul" style="left:245px;top:683px;width:104px"></div>
<div class="inp" style="left:349px;top:640px;width:1008px;height:44px"></div>
<div style="left:235px;top:694px;width:1118px;height:17px;background:#f4f4f4"></div>
<div style="left:251px;top:694px;width:1044px;height:17px;background:#cfcfcf"></div>
<svg width="5" height="7" viewBox="0 0 5 7" style="left:240px;top:699px"><path d="M4.200 0L0 3.200L4.200 6.400Z" fill="#787886"/></svg>
<svg width="5" height="7" viewBox="0 0 5 7" style="left:1342px;top:699px"><path d="M0 0L4.200 3.200L0 6.400Z" fill="#606068"/></svg>
<div style="left:234.500px;top:714px;width:74px;height:23px;background:#fdeea0;border:1px solid #d4c886;border-radius:2.500px"><div style="left:2px;top:2px;width:68px;height:17px;border:1px dotted #222;border-radius:2px"></div><span style="left:15px;top:4px;font-size:12px">添加(<u>A</u>)</span></div>
<div style="left:315px;top:714px;width:74px;height:23px;background:#fdeea0;border:1px solid #e6d88a;border-radius:2px"><span style="left:16px;top:4px;font-size:12px">取消(<u>C</u>)</span></div>
<div style="left:1353px;top:110px;width:4.500px;height:635px;background:#f6f6f6"></div>
<svg width="1364" height="750" viewBox="0 0 1364 750" style="left:0;top:0;pointer-events:none"><path d="M239.600 109.600 L246.300 125.800 L242.700 125.300 L172 617.800 L170.400 617.800 L233.200 124.800 L230.300 125.300 Z" fill="#f8383b"/><path d="M128 585.200 L144 610.800 L147.800 609 L147.800 627.600 L133.200 616 L136.800 614 Z" fill="#f8383b"/></svg>
</div>
</body>
</html>
